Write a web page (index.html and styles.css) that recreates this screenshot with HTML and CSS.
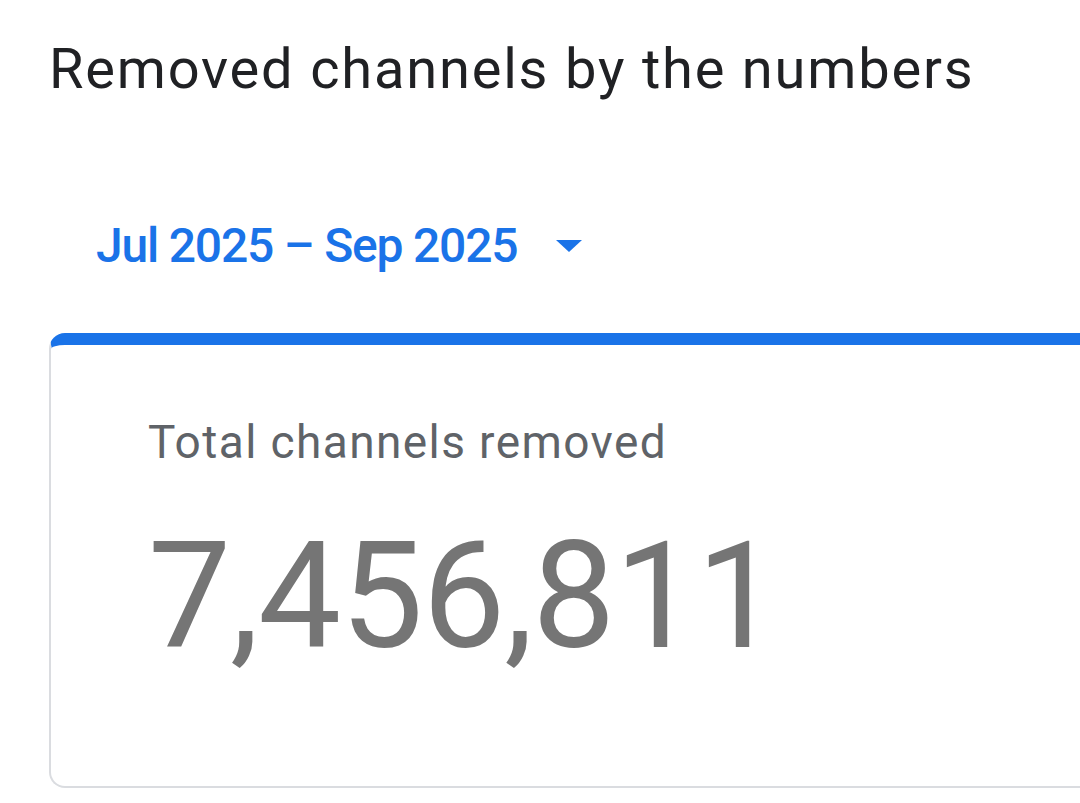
FILE: index.html
```html
<!DOCTYPE html>
<html>
<head>
<meta charset="utf-8">
<link rel="stylesheet" href="styles.css">
</head>
<body>
<main class="page">
  <h1 class="title">Removed channels by the numbers</h1>
  <button class="range">
    <span class="range-label">Jul 2025 – Sep 2025</span>
    <svg class="caret" width="28" height="14" viewBox="0 0 28 14"><path d="M1 1 L27 1 L14 13 Z" fill="#1a73e8"/></svg>
  </button>
  <section class="card">
    <div class="card-label">Total channels removed</div>
    <div class="card-value">7,456,811</div>
  </section>
</main>
</body>
</html>
```
FILE: styles.css
```css
html, body {
  margin: 0;
  padding: 0;
  background: #ffffff;
}
body {
  font-family: Roboto, "Open Sans", sans-serif;
  overflow: hidden;
  width: 1080px;
  height: 803px;
}
.page {
  display: flex;
  flex-direction: column;
  align-items: flex-start;
  padding: 35px 0 0 49px;
  overflow: hidden;
}
.title {
  margin: 0;
  font-weight: 400;
  font-size: 56px;
  line-height: 68px;
  letter-spacing: 1.8px;
  color: #202124;
  white-space: nowrap;
}
.range {
  margin: 115px 0 0 47px;
  padding: 0;
  border: 0;
  background: none;
  display: flex;
  align-items: center;
  gap: 38px;
  font-family: inherit;
  cursor: pointer;
}
.range-label {
  font-size: 48px;
  line-height: 56px;
  font-weight: 500;
  letter-spacing: -1.2px;
  color: #1a73e8;
  white-space: nowrap;
}
.caret {
  display: block;
}
.card {
  margin-top: 59px;
  width: 1031px;
  height: 455px;
  box-sizing: border-box;
  border: 2px solid #dadce0;
  border-right: 0;
  border-top: 12px solid #1a73e8;
  border-radius: 16px 0 0 16px;
  padding: 69px 0 0 97px;
}
.card-label {
  font-size: 46px;
  line-height: 56px;
  letter-spacing: 1.4px;
  color: #5f6368;
  white-space: nowrap;
}
.card-value {
  margin-top: 52px;
  font-size: 148px;
  line-height: 150px;
  letter-spacing: -1.1px;
  color: #757575;
  white-space: nowrap;
}
```
